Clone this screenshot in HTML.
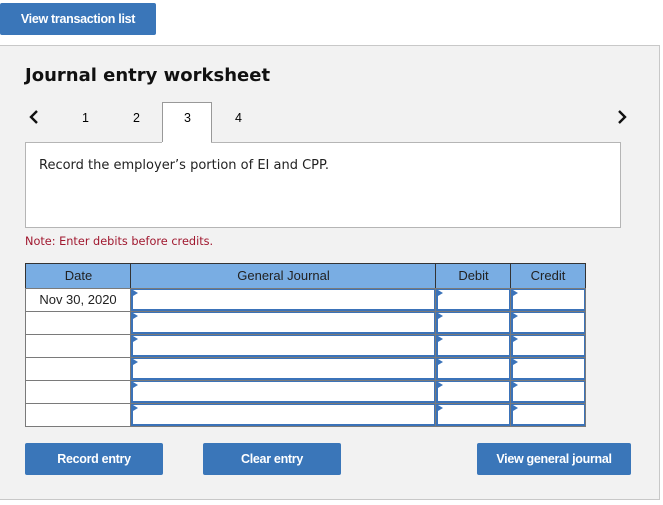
<!DOCTYPE html><html><head><style>
body{margin:0;width:663px;height:505px;background:#fff;font-family:"Liberation Sans",Arial,sans-serif;position:relative;overflow:hidden}
.a{position:absolute}
.btn{position:absolute;background:#3a76b9;color:#fff;font-weight:bold;font-size:12.5px;text-align:center;border-radius:2px;letter-spacing:-0.3px}
.panel{left:0;top:45px;width:659px;height:453px;background:#f2f2f2;border:1px solid #c8c8c8;border-left:none}
.v{font-family:"DejaVu Sans",Verdana,sans-serif}
.h{position:absolute;top:263px;height:24px;background:#79ade3;border:1px solid #333;border-right:none;font-size:13px;color:#222;text-align:center;line-height:24px;box-sizing:content-box}
.d{position:absolute;left:25px;width:104px;height:22px;background:#fff;border:1px solid #7a7a7a;font-size:13px;text-align:center;line-height:22px;color:#222}
.i{position:absolute;height:19px;background:#fff;border:2px solid #3b73b9;border-top-width:1px;border-right-width:1px;box-shadow:0 0 0 1px #7a7a7a}
.i:before{content:"";position:absolute;left:0;top:0;border-left:5px solid #3b73b9;border-top:3px solid transparent;border-bottom:3px solid transparent}
</style></head><body>
<div class="btn" style="left:0;top:3px;width:156px;height:32px;line-height:32px">View transaction list</div>
<div class="a panel"></div>
<div class="a v" style="left:25px;top:65px;font-size:18px;font-weight:bold;color:#111">Journal entry worksheet</div>
<svg class="a" style="left:28px;top:109px" width="12" height="16"><path d="M9 2L3 8L9 14" stroke="#111" stroke-width="2.4" fill="none"/></svg>
<svg class="a" style="left:616px;top:109px" width="12" height="16"><path d="M3 2L9 8L3 14" stroke="#111" stroke-width="2.4" fill="none"/></svg>
<div class="a" style="left:162px;top:102px;width:48px;height:42px;background:#fff;border:1px solid #999;border-bottom:none"></div>
<div class="a" style="left:82px;top:111px;font-size:12.5px">1</div>
<div class="a" style="left:133px;top:111px;font-size:12.5px">2</div>
<div class="a" style="left:184px;top:111px;font-size:12.5px">3</div>
<div class="a" style="left:235px;top:111px;font-size:12.5px">4</div>
<div class="a" style="left:25px;top:142px;width:594px;height:84px;background:#fff;border:1px solid #b5b5b5"></div>
<div class="a" style="left:162px;top:142px;width:49px;height:2px;background:#fff"></div>
<div class="a v" style="left:39px;top:158px;font-size:13px;color:#222">Record the employer’s portion of EI and CPP.</div>
<div class="a v" style="left:25px;top:235px;font-size:11.3px;color:#a0172e">Note: Enter debits before credits.</div>

<div class="h" style="left:25px;width:105px">Date</div>
<div class="h" style="left:130px;width:305px">General Journal</div>
<div class="h" style="left:435px;width:75px">Debit</div>
<div class="h" style="left:510px;width:74px;border-right:1px solid #333">Credit</div>

<div class="d" style="top:288px">Nov 30, 2020</div>
<div class="d" style="top:311px"></div>
<div class="d" style="top:334px"></div>
<div class="d" style="top:357px"></div>
<div class="d" style="top:380px"></div>
<div class="d" style="top:403px"></div>

<div class="i" style="left:131px;top:289px;width:301px"></div><div class="i" style="left:436px;top:289px;width:71px"></div><div class="i" style="left:511px;top:289px;width:71px"></div>
<div class="i" style="left:131px;top:312px;width:301px"></div><div class="i" style="left:436px;top:312px;width:71px"></div><div class="i" style="left:511px;top:312px;width:71px"></div>
<div class="i" style="left:131px;top:335px;width:301px"></div><div class="i" style="left:436px;top:335px;width:71px"></div><div class="i" style="left:511px;top:335px;width:71px"></div>
<div class="i" style="left:131px;top:358px;width:301px"></div><div class="i" style="left:436px;top:358px;width:71px"></div><div class="i" style="left:511px;top:358px;width:71px"></div>
<div class="i" style="left:131px;top:381px;width:301px"></div><div class="i" style="left:436px;top:381px;width:71px"></div><div class="i" style="left:511px;top:381px;width:71px"></div>
<div class="i" style="left:131px;top:404px;width:301px"></div><div class="i" style="left:436px;top:404px;width:71px"></div><div class="i" style="left:511px;top:404px;width:71px"></div>

<div class="btn" style="left:25px;top:443px;width:138px;height:32px;line-height:32px">Record entry</div>
<div class="btn" style="left:203px;top:443px;width:138px;height:32px;line-height:32px">Clear entry</div>
<div class="btn" style="left:477px;top:443px;width:154px;height:32px;line-height:32px">View general journal</div>
</body></html>
